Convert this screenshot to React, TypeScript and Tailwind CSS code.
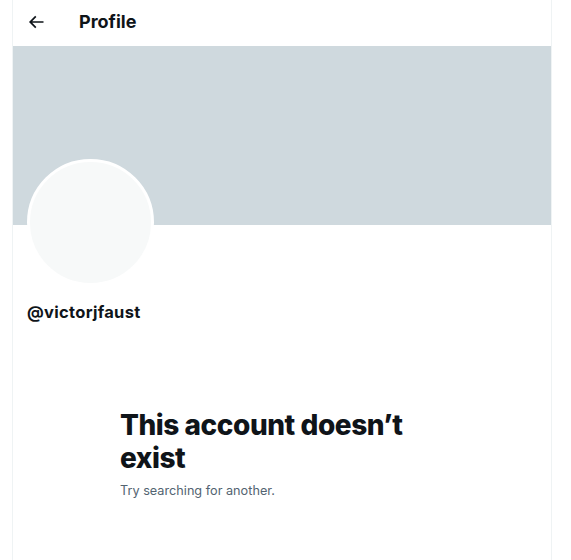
import React from "react";

export default function App() {
  return (
    <div
      className="w-[571px] h-[560px] bg-white overflow-hidden"
      style={{ fontFamily: "Inter, 'Noto Sans', sans-serif" }}
    >
      <div className="ml-[12px] w-[540px] h-full border-x border-[#eff3f4] flex flex-col">
        {/* Header */}
        <div className="h-[46px] pb-[3px] flex items-center">
          <div className="w-[66px] pl-[13px] flex items-center">
            <svg viewBox="0 0 24 24" className="w-[20px] h-[20px] text-[#0f1419]" fill="currentColor">
              <path d="M7.414 13l5.043 5.04-1.414 1.42L3.586 12l7.457-7.46 1.414 1.42L7.414 11H21v2H7.414z" />
            </svg>
          </div>
          <h2 className="text-[18px] font-bold text-[#0f1419]">Profile</h2>
        </div>

        {/* Banner */}
        <div className="h-[179px] bg-[#cfd9de]" />

        {/* Avatar + handle */}
        <div className="px-[14px] relative">
          <div className="-mt-[66px] w-[127px] h-[127px] rounded-full bg-[#f7f9f9] border-[3px] border-white" />
          <div className="mt-[16px] text-[16.5px] font-bold text-[#0f1419] leading-5 tracking-[0.3px]">@victorjfaust</div>
        </div>

        {/* Empty state */}
        <div className="pl-[107px] pt-[87px]">
          <h1 className="text-[28px] font-extrabold text-[#0f1419] leading-[33px] w-[300px] tracking-[-0.45px]">
            This account doesn’t exist
          </h1>
          <p className="mt-[6px] text-[12.7px] text-[#536471]">Try searching for another.</p>
        </div>
      </div>
    </div>
  );
}
